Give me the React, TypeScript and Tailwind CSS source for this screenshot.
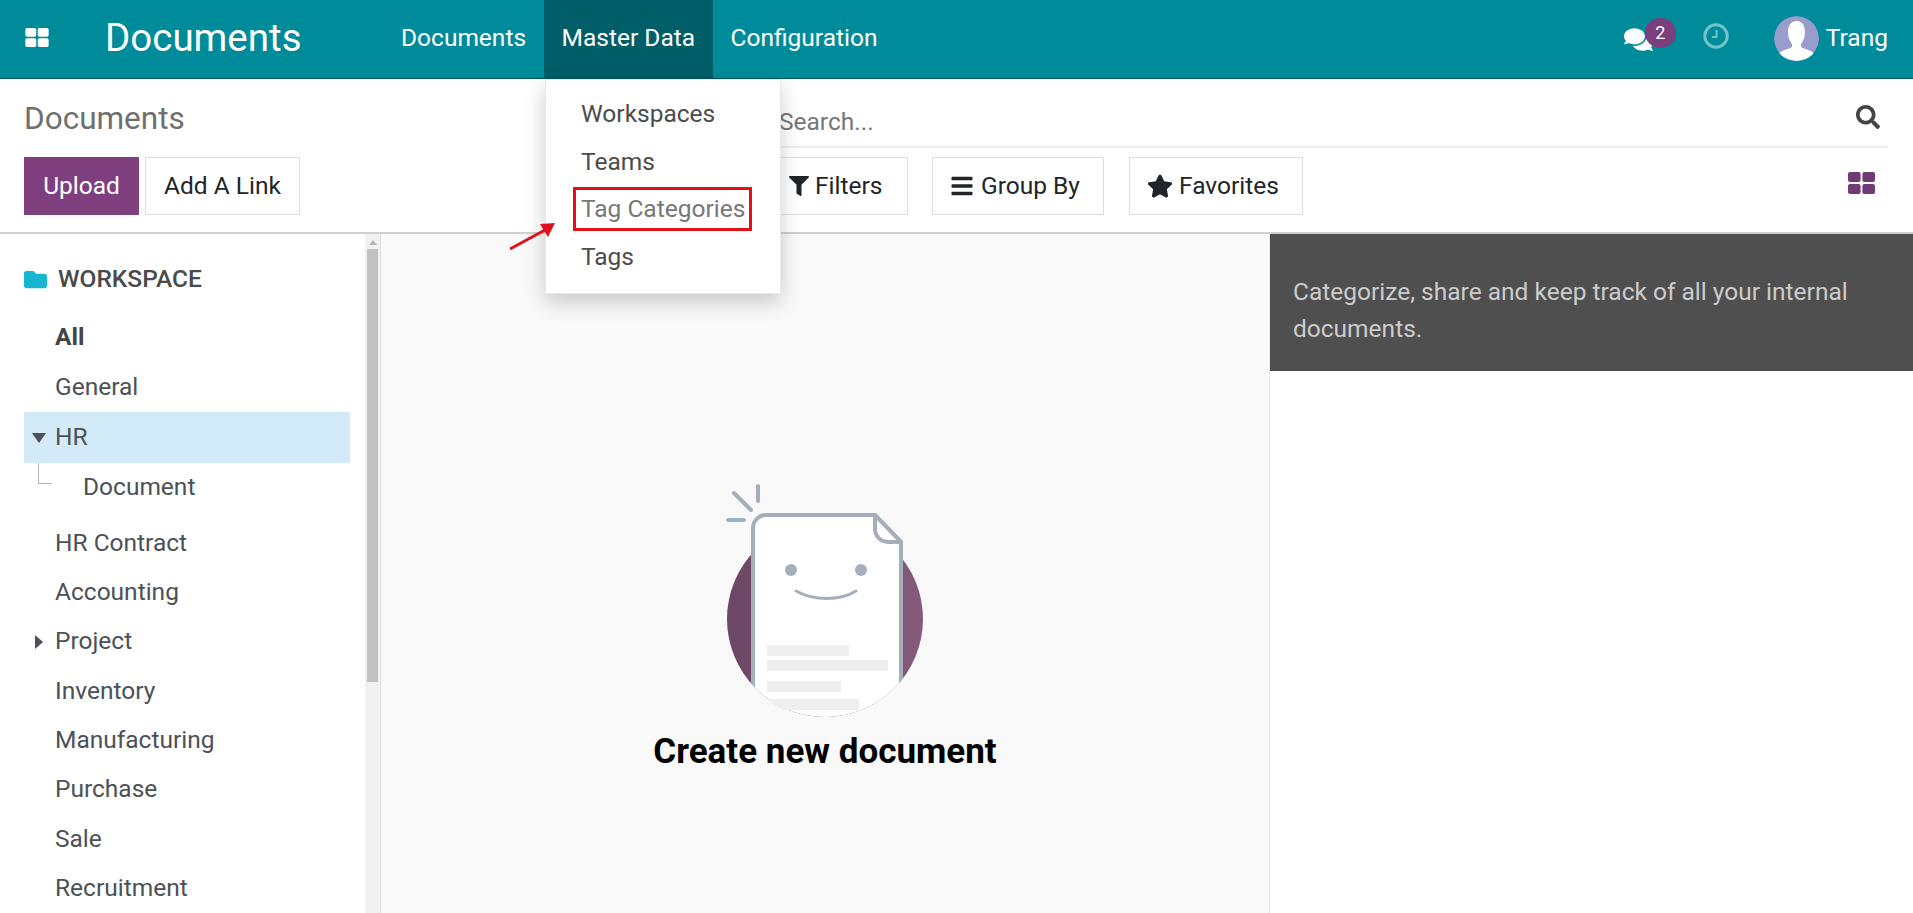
import { FaBars, FaComments, FaFilter, FaFolder, FaSearch, FaStar } from 'react-icons/fa';

const navItems = ['Documents', 'Master Data', 'Configuration'];
const menuItems = ['Workspaces', 'Teams', 'Tag Categories', 'Tags'];
const lowerWorkspaces = ['Accounting', 'Project', 'Inventory', 'Manufacturing', 'Purchase', 'Sale', 'Recruitment'];

function GridIcon({ className }: { className: string }) {
  return (
    <svg viewBox="0 0 27 22" className={className} fill="currentColor">
      <rect x="0" y="0" width="12.6" height="10" rx="2" />
      <rect x="14.4" y="0" width="12.6" height="10" rx="2" />
      <rect x="0" y="12" width="12.6" height="10" rx="2" />
      <rect x="14.4" y="12" width="12.6" height="10" rx="2" />
    </svg>
  );
}

function TopNav() {
  return (
    <header className="flex h-[79px] items-stretch border-b border-[#00525c] bg-[#008b9b] text-white">
      <div className="flex w-[105px] items-center pl-[25px]">
        <GridIcon className="-mt-[3px] h-[19px] w-[24px]" />
      </div>
      <div className="flex w-[278px] items-center pb-[2px] text-[38.5px]">Documents</div>
      {navItems.map((item) => (
        <div
          key={item}
          className={
            item === 'Master Data'
              ? 'flex items-center bg-[#005e69] px-[17.5px] pb-[2px] text-[24.5px]'
              : 'flex items-center px-[18px] pb-[2px] text-[24.5px]'
          }
        >
          {item}
        </div>
      ))}
      <div className="ml-auto flex items-center pr-[25px]">
        <div className="relative mr-[50px] h-[24px] w-[29px]">
          <FaComments size={29} className="-mt-[2px]" />
          <span className="absolute -top-[9px] -right-[23px] flex h-[30px] w-[31px] items-center justify-center rounded-full bg-[#7c3f7d] text-[18px] leading-none">
            2
          </span>
        </div>
        <svg viewBox="0 0 26 26" className="mr-[45px] -mt-[7px] h-[26px] w-[26px]" fill="none" stroke="#74c2c9">
          <circle cx="13" cy="13" r="11.2" strokeWidth="3" />
          <path d="M13.5 7v7H9" strokeWidth="2" />
        </svg>
        <svg viewBox="0 0 45 45" className="-mt-[2px] h-[45px] w-[45px] rounded-full">
          <circle cx="22.5" cy="22.5" r="22.5" fill="#9a9ccb" />
          <path d="M22.5 5c6 0 8.500 5 8.500 11 0 5-1.500 9-4 12v3c3 2 10 3 14 7-4 4-11 7-18.500 7S8 42 4 38c4-4 11-5 14-7v-3c-2.500-3-4-7-4-12C14 10 16.500 5 22.500 5z" fill="#fff" />
        </svg>
        <span className="ml-[7px] pb-[2px] text-[24.5px]">Trang</span>
      </div>
    </header>
  );
}

function ControlPanel() {
  return (
    <section className="flex h-[155px] border-b-2 border-[#d0d0d0] bg-white">
      <div className="w-[779px] pl-[24px]">
        <div className="flex h-[78px] items-center pt-[1px] text-[31.5px] text-[#6f6f6f]">Documents</div>
        <div className="flex gap-[6px] text-[24.5px]">
          <button className="flex h-[58px] w-[115px] items-center justify-center bg-[#7f3f7f] text-white">Upload</button>
          <button className="flex h-[58px] w-[155px] items-center justify-center border border-[#dedede] text-[#212529]">
            Add A Link
          </button>
        </div>
      </div>
      <div className="flex flex-1 flex-col pr-[25px]">
        <div className="flex h-[69px] items-center justify-between border-b-2 border-[#eeeeee] pt-[19px] pr-[8px] text-[24.5px] text-[#777777]">
          <span>Search...</span>
          <FaSearch size={24} className="-mt-[11px] text-[#444444]" />
        </div>
        <div className="flex items-start pt-[9px] text-[24.5px] text-[#212529]">
          <button className="-ml-[8px] flex h-[58px] w-[137px] items-center border border-[#dedede] pl-[17px]">
            <FaFilter size={20} className="mr-[6px]" />
            Filters
          </button>
          <button className="ml-[24px] flex h-[58px] w-[172px] items-center border border-[#dedede] pl-[17px]">
            <FaBars size={24} className="mr-[7px]" />
            Group By
          </button>
          <button className="ml-[25px] flex h-[58px] w-[174px] items-center border border-[#dedede] pl-[17px]">
            <FaStar size={26} className="mr-[6px]" />
            Favorites
          </button>
          <GridIcon className="mt-[15px] ml-auto mr-[13px] h-[22px] w-[27px] text-[#6f3a75]" />
        </div>
      </div>
    </section>
  );
}

function Sidebar() {
  return (
    <aside className="flex w-[381px] shrink-0 overflow-hidden border-r border-[#dedede] bg-white text-[24.5px] text-[#4c5157]">
      <div className="w-[365px] pt-[20px] pl-[24px]">
        <div className="mb-[9px] flex h-[50px] items-center text-[#4a4a4a]">
          <FaFolder size={23} className="mr-[11px] text-[#17b5cf]" />
          <span className="font-medium">WORKSPACE</span>
        </div>
        <div className="flex h-[49px] items-center pl-[31px] font-bold text-[#444444]">All</div>
        <div className="flex h-[50px] items-center pl-[31px]">General</div>
        <div className="flex h-[51px] w-[326px] items-center bg-[#d3eaf8] pl-[8px]">
          <svg viewBox="0 0 14 10" className="mr-[9px] h-[10px] w-[14px]" fill="#4c5157">
            <path d="M0 0h14L7 10z" />
          </svg>
          HR
        </div>
        <div className="relative flex h-[49px] items-center pl-[59px]">
          <span className="absolute top-0 left-[14px] h-[21px] w-[14px] border-b border-l border-[#b0b5ba]" />
          Document
        </div>
        <div className="mt-[6.5px] flex h-[49.3px] items-center pl-[31px]">HR Contract</div>
        {lowerWorkspaces.map((name) => (
          <div key={name} className="relative flex h-[49.3px] items-center pl-[31px]">
            {name === 'Project' && (
              <svg viewBox="0 0 8 14" className="absolute left-[11px] h-[14px] w-[8px]" fill="#4c5157">
                <path d="M0 0l8 7-8 7z" />
              </svg>
            )}
            {name}
          </div>
        ))}
      </div>
      <div className="relative w-[15px] bg-[#f1f1f1] px-[2px]">
        <svg viewBox="0 0 8 5" className="mx-auto mt-[6px] h-[5px] w-[8px]" fill="#b5b5b5">
          <path d="M4 0l4 5H0z" />
        </svg>
        <div className="mt-[4px] h-[433px] bg-[#c1c1c1]" />
      </div>
    </aside>
  );
}

function EmptyIllustration() {
  return (
    <svg viewBox="0 0 300 270" className="ml-[29px] h-[270px] w-[300px] shrink-0">
      <defs>
        <linearGradient id="disc" x1="0" x2="1">
          <stop offset="0" stopColor="#6c4765" />
          <stop offset="1" stopColor="#855a7b" />
        </linearGradient>
        {/* the sheet pokes out above the disc but is cut off by it below */}
        <clipPath id="sheetClip">
          <rect x="0" y="0" width="300" height="159" />
          <circle cx="135" cy="159" r="98" />
        </clipPath>
      </defs>
      <circle cx="135" cy="159" r="98" fill="url(#disc)" />
      <g clipPath="url(#sheetClip)">
        <path d="M62 270V68a14 14 0 0 1 14-14h109l27 28v188z" fill="#fff" />
        <path d="M63 270V68a13 13 0 0 1 13-13h109l26 27v188" fill="none" stroke="#a5afbb" strokeWidth="4" />
      </g>
      <path d="M185 55v14a13 13 0 0 0 13 13h13z" fill="#fff" stroke="#a5afbb" strokeWidth="4" strokeLinejoin="round" />
      <path d="M68 26v15M44 33l17 17M38 60h16" stroke="#a5afbb" strokeWidth="4" strokeLinecap="round" fill="none" />
      <circle cx="101" cy="110" r="6" fill="#a5afbb" />
      <circle cx="171" cy="110" r="6" fill="#a5afbb" />
      <path d="M106 131c18 10 44 10 60 0" fill="none" stroke="#a5afbb" strokeWidth="3" strokeLinecap="round" />
      <rect x="77" y="185" width="82" height="11" fill="#eeeeee" />
      <rect x="77" y="200" width="121" height="11" fill="#eeeeee" />
      <rect x="77" y="221" width="74" height="11" fill="#eeeeee" />
      <path d="M77 239h92v11H93c-6-3-11-7-16-11z" fill="#eeeeee" />
    </svg>
  );
}

function Dropdown() {
  return (
    <div className="absolute top-[79px] left-[545px] z-10 h-[215px] w-[236px] border border-[#e8e8e8] bg-white pt-[11px] pl-[35px] text-[24.5px] text-[#4c4c4c] shadow-[0_8px_20px_rgba(0,0,0,0.2)]">
      {menuItems.map((item) => (
        <div
          key={item}
          className={item === 'Tag Categories' ? 'flex h-[47.5px] items-center text-[#777777]' : 'flex h-[47.5px] items-center'}
        >
          {item}
        </div>
      ))}
      <div className="absolute top-[107px] left-[27px] h-[44px] w-[179px] border-[3px] border-[#e2101b]" />
    </div>
  );
}

export default function App() {
  return (
    <div
      className="relative flex h-[913px] w-[1913px] flex-col overflow-hidden bg-white"
      style={{ fontFamily: 'Roboto, sans-serif' }}
    >
      <TopNav />
      <ControlPanel />
      <div className="flex min-h-0 flex-1">
        <Sidebar />
        <main className="flex w-[888px] shrink-0 flex-col items-center bg-[#f9f9f9] pt-[226px]">
          <EmptyIllustration />
          <h2 className="h-[44px] text-[35px] leading-[44px] font-bold text-black">Create new document</h2>
        </main>
        <div className="flex-1 border-l border-[#e4e4e4] bg-white">
          <div className="h-[137px] bg-[#4f4f4f] px-[23px] pt-[39px] text-[24.5px] leading-[37px] text-[#cccccc]">
            Categorize, share and keep track of all your internal documents.
          </div>
        </div>
      </div>
      <Dropdown />
      <svg viewBox="0 0 50 30" className="absolute top-[221px] left-[507px] z-20 h-[30px] w-[50px]">
        <path d="M3 28L38 9" stroke="#e2101b" strokeWidth="3" />
        <path d="M48 2L33 3l8 13z" fill="#e2101b" />
      </svg>
    </div>
  );
}
